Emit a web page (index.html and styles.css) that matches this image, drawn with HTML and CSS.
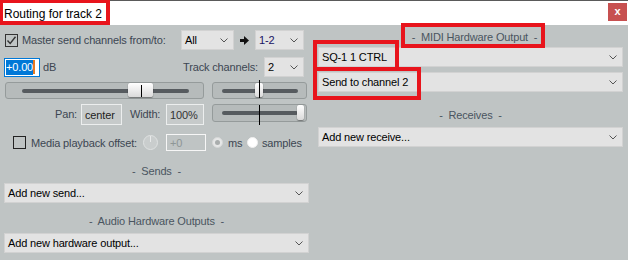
FILE: index.html
```html
<!DOCTYPE html>
<html>
<head>
<meta charset="utf-8">
<link rel="stylesheet" href="styles.css">
</head>
<body>
<div class="win">
  <div class="titlebar">
    <span class="title">Routing for track 2</span>
    <span class="close">x</span>
  </div>
  <div class="content">
    <div class="left">
      <div class="row r1">
        <span class="chk checked"><svg width="11" height="11" viewBox="0 0 11 11"><polyline points="1.5,5.5 4.2,8.5 9.5,1.8" fill="none" stroke="#333" stroke-width="1.4"/></svg></span>
        <span class="lbl master">Master send channels from/to:</span>
        <span class="sel w-all">All<svg class="chev" width="8" height="5" viewBox="0 0 8 5"><polyline points="0.5,0.5 4,4 7.5,0.5" fill="none" stroke="#555" stroke-width="1"/></svg></span>
        <span class="arrow"><svg width="9" height="9" viewBox="0 0 9 9"><rect x="0" y="3" width="5" height="3" fill="#111"/><polygon points="4,0 9,4.5 4,9" fill="#111"/></svg></span>
        <span class="sel w-12 dark">1-2<svg class="chev" width="8" height="5" viewBox="0 0 8 5"><polyline points="0.5,0.5 4,4 7.5,0.5" fill="none" stroke="#555" stroke-width="1"/></svg></span>
      </div>
      <div class="row r2">
        <span class="vol"><span class="selected">+0.00</span><span class="caret"></span></span>
        <span class="lbl db">dB</span>
        <span class="grow"></span>
        <span class="lbl">Track channels:</span>
        <span class="sel w-tc">2<svg class="chev" width="8" height="5" viewBox="0 0 8 5"><polyline points="0.5,0.5 4,4 7.5,0.5" fill="none" stroke="#555" stroke-width="1"/></svg></span>
      </div>
      <div class="row r3">
        <div class="slider s-vol">
          <span class="groove"></span>
          <span class="thumb t-vol"></span>
          <span class="line l-vol"></span>
        </div>
        <div class="slider s-pan">
          <span class="groove"></span>
          <span class="thumb t-pan"></span>
          <span class="line l-pan"></span>
        </div>
      </div>
      <div class="row r4">
        <span class="lbl pan">Pan:</span>
        <span class="box b-center">center</span>
        <span class="lbl width">Width:</span>
        <span class="box b-width">100%</span>
        <div class="slider s-width">
          <span class="groove"></span>
          <span class="thumb t-width"></span>
          <span class="line l-width"></span>
        </div>
      </div>
      <div class="row r5">
        <span class="chk c-media"></span>
        <span class="lbl media">Media playback offset:</span>
        <span class="knob"><span class="tick"></span></span>
        <span class="box b-off">+0</span>
        <span class="radio on"><span class="dot"></span></span>
        <span class="lbl ms">ms</span>
        <span class="radio"></span>
        <span class="lbl samples">samples</span>
      </div>
      <div class="section s-sends">-&nbsp; Sends &nbsp;-</div>
      <div class="drop">Add new send...<svg class="chev" width="8" height="5" viewBox="0 0 8 5"><polyline points="0.5,0.5 4,4 7.5,0.5" fill="none" stroke="#555" stroke-width="1"/></svg></div>
      <div class="section s-audio">-&nbsp; Audio Hardware Outputs &nbsp;-</div>
      <div class="drop">Add new hardware output...<svg class="chev" width="8" height="5" viewBox="0 0 8 5"><polyline points="0.5,0.5 4,4 7.5,0.5" fill="none" stroke="#555" stroke-width="1"/></svg></div>
    </div>
    <div class="right">
      <div class="section s-midi">-&nbsp; MIDI Hardware Output &nbsp;-</div>
      <div class="drop d-sq">SQ-1 1 CTRL<svg class="chev" width="8" height="5" viewBox="0 0 8 5"><polyline points="0.5,0.5 4,4 7.5,0.5" fill="none" stroke="#555" stroke-width="1"/></svg></div>
      <div class="drop d-ch">Send to channel 2<svg class="chev" width="8" height="5" viewBox="0 0 8 5"><polyline points="0.5,0.5 4,4 7.5,0.5" fill="none" stroke="#555" stroke-width="1"/></svg></div>
      <div class="section s-rec">-&nbsp; Receives &nbsp;-</div>
      <div class="drop d-rec">Add new receive...<svg class="chev" width="8" height="5" viewBox="0 0 8 5"><polyline points="0.5,0.5 4,4 7.5,0.5" fill="none" stroke="#555" stroke-width="1"/></svg></div>
    </div>
  </div>
  <span class="mark m-title"></span>
  <span class="mark m-midi"></span>
  <span class="mark m-sq"></span>
  <span class="mark m-ch"></span>
</div>
</body>
</html>
```
FILE: styles.css
```css
html, body {
  margin: 0;
  padding: 0;
}
body {
  width: 628px;
  height: 260px;
  overflow: hidden;
  background: #bfc4c4;
  font-family: "Liberation Sans", Arial, sans-serif;
  font-size: 11px;
  letter-spacing: -0.15px;
  color: #3c4652;
}
.win {
  position: relative;
  width: 628px;
  height: 260px;
}
.titlebar {
  height: 24px;
  background: #fff;
  border-top: 1px solid #5a5a5a;
  display: flex;
  align-items: center;
  justify-content: space-between;
}
.title {
  font-size: 12px;
  letter-spacing: 0;
  color: #000;
  margin-left: 4px;
  margin-top: 1px;
}
.close {
  width: 19px;
  height: 18px;
  margin-right: 1px;
  margin-top: -2px;
  background: #c75050;
  color: #fff;
  font-weight: bold;
  font-size: 11px;
  display: flex;
  align-items: center;
  justify-content: center;
  line-height: 1;
  padding-bottom: 2px;
  box-sizing: border-box;
}
.content {
  display: flex;
}
.left {
  width: 305px;
  padding-left: 4px;
  padding-right: 7px;
}
.right {
  flex: 1;
  padding-left: 2px;
  padding-right: 5px;
}
.row {
  display: flex;
  align-items: center;
}
.r1 {
  margin-top: 5px;
  height: 20px;
  margin-right: 5px;
}
.chk {
  width: 11px;
  height: 11px;
  border: 1px solid #333;
  background: transparent;
  display: flex;
  align-items: center;
  justify-content: center;
  flex: none;
}
.r1 .chk {
  margin-left: 1px;
}
.lbl {
  white-space: nowrap;
}
.master {
  margin-left: 4px;
  flex: 1;
}
.sel {
  position: relative;
  height: 20px;
  box-sizing: border-box;
  background: #e3e3e3;
  border: 1px solid #d2d2d2;
  color: #000;
  display: flex;
  align-items: center;
  padding-left: 3px;
  flex: none;
}
.sel.dark {
  color: #1a1464;
}
.sel .chev, .drop .chev {
  position: absolute;
  right: 5px;
  top: 7px;
}
.w-all {
  width: 53px;
}
.arrow {
  width: 20px;
  display: flex;
  justify-content: center;
  padding-right: 1px;
  flex: none;
}
.w-12 {
  width: 49px;
}
.r2 {
  margin-top: 7px;
  height: 20px;
  margin-right: 5px;
}
.vol {
  width: 36px;
  height: 19px;
  box-sizing: border-box;
  border: 1px solid #0078d7;
  background: #fff;
  display: flex;
  align-items: center;
  padding-left: 1px;
}
.selected {
  background: #0078d7;
  color: #fff;
  padding: 1px 0;
  line-height: 13px;
}
.caret {
  width: 2px;
  height: 14px;
  background: #e87a20;
}
.db {
  margin-left: 3px;
}
.grow {
  flex: 1;
}
.w-tc {
  width: 40px;
  margin-left: 6px;
}
.r3 {
  margin-top: 5px;
  height: 17px;
}
.slider {
  position: relative;
  box-sizing: border-box;
  border: 1px solid #959b9b;
  border-radius: 3px;
  background: #b6bbbb;
  flex: none;
}
.groove {
  position: absolute;
  top: 50%;
  margin-top: -2px;
  height: 4px;
  border-radius: 2px;
  background: #565b5f;
}
.thumb {
  position: absolute;
  top: 0;
  height: 14px;
  border-radius: 2px;
  background: linear-gradient(#ffffff, #dadada);
  box-shadow: 0 1px 1px rgba(0,0,0,0.35), 0 0 1px rgba(0,0,0,0.3);
}
.line {
  position: absolute;
  width: 1px;
  background: #000;
}
.s-vol {
  width: 199px;
  height: 17px;
  margin-left: 1px;
}
.s-vol .groove {
  left: 16px;
  width: 167px;
}
.t-vol {
  left: 122px;
  width: 25px;
}
.l-vol {
  left: 135px;
  top: 2px;
  height: 12px;
}
.s-pan {
  width: 95px;
  height: 17px;
  margin-left: 8px;
}
.s-pan .groove, .s-width .groove {
  left: 9px;
  width: 76px;
}
.t-pan {
  left: 42px;
  width: 8px;
}
.l-pan {
  left: 46px;
  top: -3px;
  height: 18px;
}
.r4 {
  margin-top: 5px;
  height: 21px;
  align-items: flex-start;
}
.r4 .lbl {
  line-height: 21px;
}
.pan {
  margin-left: 51px;
  width: 22px;
}
.box {
  height: 21px;
  box-sizing: border-box;
  border: 1px solid #eceeee;
  background: #c6caca;
  color: #222;
  display: flex;
  align-items: center;
  padding-left: 3px;
  flex: none;
}
.b-center {
  width: 41px;
  margin-left: 4px;
}
.width {
  margin-left: 8px;
  width: 32px;
}
.b-width {
  width: 38px;
  margin-left: 4px;
  color: #333;
}
.s-width {
  width: 95px;
  height: 18px;
  margin-left: 8px;
}
.t-width {
  left: 84px;
  width: 7px;
  height: 15px;
}
.l-width {
  left: 46px;
  top: 0;
  height: 20px;
}
.r5 {
  margin-top: 9px;
  height: 17px;
}
.c-media {
  margin-left: 9px;
  border-color: #222;
}
.media {
  margin-left: 5px;
  width: 107px;
}
.knob {
  position: relative;
  width: 15px;
  height: 15px;
  box-sizing: border-box;
  border-radius: 50%;
  background: #c9cdcd;
  border: 1px solid #dfe2e2;
  margin-left: 5px;
  flex: none;
}
.tick {
  position: absolute;
  left: 6px;
  top: 0;
  width: 1px;
  height: 6px;
  background: #e8eaea;
}
.b-off {
  width: 40px;
  height: 17px;
  margin-left: 8px;
  border-color: #f6f6f6;
  background: #bfc4c4;
  color: #8e9696;
}
.radio {
  position: relative;
  width: 11px;
  height: 11px;
  box-sizing: border-box;
  border-radius: 50%;
  background: #ffffff;
  border: 1px solid #f0f0f0;
  flex: none;
}
.radio.on {
  margin-left: 6px;
  background: #e6e7e7;
  border-color: #d6d8d8;
}
.dot {
  position: absolute;
  left: 2px;
  top: 2px;
  width: 5px;
  height: 5px;
  border-radius: 50%;
  background: #a9adad;
}
.ms {
  margin-left: 5px;
  width: 19px;
}
.samples {
  margin-left: 4px;
}
.section {
  height: 16px;
  line-height: 16px;
  text-align: center;
  color: #4a5560;
  white-space: nowrap;
}
.s-sends {
  margin-top: 12px;
}
.s-audio {
  margin-top: 10px;
}
.drop {
  position: relative;
  height: 20px;
  box-sizing: border-box;
  margin-top: 4px;
  background: #e3e3e3;
  border: 1px solid #d2d2d2;
  color: #000;
  display: flex;
  align-items: center;
  padding-left: 3px;
}
.s-midi {
  margin-top: 4px;
  padding-left: 8px;
}
.d-sq {
  margin-top: 2px;
}
.d-ch {
  margin-top: 5px;
}
.s-rec {
  margin-top: 15px;
}
.mark {
  position: absolute;
  box-sizing: border-box;
  border: 4px solid #e8141c;
}
.m-title {
  left: 0;
  top: 0;
  width: 110px;
  height: 25px;
  border-width: 3px 4px 4px 3px;
}
.m-midi {
  left: 401px;
  top: 23px;
  width: 144px;
  height: 25px;
}
.m-sq {
  left: 313px;
  top: 40px;
  width: 86px;
  height: 31px;
}
.m-ch {
  left: 313px;
  top: 67px;
  width: 108px;
  height: 33px;
}
```
